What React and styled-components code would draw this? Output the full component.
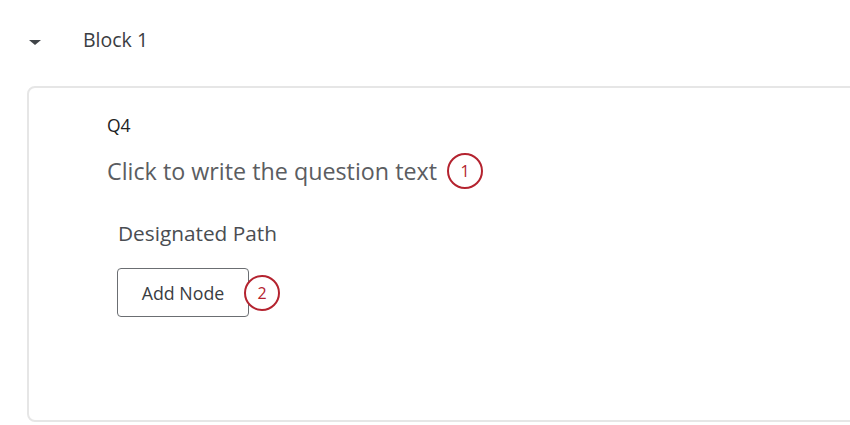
import React from "react";
import styled, { createGlobalStyle } from "styled-components";

const GlobalStyle = createGlobalStyle`
  html, body {
    margin: 0;
    padding: 0;
    background: #ffffff;
    font-family: "Open Sans", "Liberation Sans", sans-serif;
  }
`;

const Page = styled.div`
  width: 850px;
  height: 425px;
  overflow: hidden;
  background: #fff;
`;

const BlockHeader = styled.div`
  display: flex;
  align-items: center;
  height: 80px;
  padding-left: 29px;
  box-sizing: border-box;
  padding-bottom: 2px;
`;

const Caret = styled.span`
  width: 0;
  height: 0;
  border-left: 6px solid transparent;
  border-right: 6px solid transparent;
  border-top: 5px solid #404448;
  margin-top: 7px;
  margin-right: 42px;
`;

const BlockTitle = styled.span`
  font-size: 19.5px;
  color: #3a3d42;
`;

const Card = styled.div`
  margin: 6px 0 0 27px;
  width: 860px;
  height: 336px;
  box-sizing: border-box;
  border: 2px solid #e6e6e6;
  border-radius: 8px;
  padding: 26px 0 0 78px;
`;

const QuestionId = styled.div`
  font-size: 17.5px;
  color: #222;
  line-height: 22px;
`;

const QuestionRow = styled.div`
  display: flex;
  align-items: center;
  gap: 10px;
  margin-top: 17px;
  height: 36px;
`;

const QuestionText = styled.span`
  font-size: 23.3px;
  line-height: 36px;
  color: #5b5d61;
`;

const Badge = styled.span`
  display: inline-flex;
  align-items: center;
  justify-content: center;
  flex-shrink: 0;
  width: 36px;
  height: 36px;
  box-sizing: border-box;
  border: 2px solid #b4232f;
  border-radius: 50%;
  background: #fff;
  color: #b4232f;
  font-size: 16px;
  margin-left: ${(p) => p.$overlap || 0}px;
  position: relative;
`;

const Section = styled.div`
  padding-left: 11px;
  margin-top: 31px;
`;

const SectionTitle = styled.div`
  font-size: 20.8px;
  color: #4a4d52;
  line-height: 26px;
`;

const ActionRow = styled.div`
  display: flex;
  align-items: center;
  margin-top: 22px;
  margin-left: -1px;
`;

const AddButton = styled.button`
  width: 132px;
  height: 49px;
  border: 1px solid #6b6e72;
  border-radius: 4px;
  background: #fff;
  color: #3a3d42;
  font-family: inherit;
  font-size: 17.8px;
  padding: 0;
`;

export default function App() {
  return (
    <Page>
      <GlobalStyle />
      <BlockHeader>
        <Caret />
        <BlockTitle>Block 1</BlockTitle>
      </BlockHeader>
      <Card>
        <QuestionId>Q4</QuestionId>
        <QuestionRow>
          <QuestionText>Click to write the question text</QuestionText>
          <Badge>1</Badge>
        </QuestionRow>
        <Section>
          <SectionTitle>Designated Path</SectionTitle>
          <ActionRow>
            <AddButton>Add Node</AddButton>
            <Badge $overlap={-5}>2</Badge>
          </ActionRow>
        </Section>
      </Card>
    </Page>
  );
}
